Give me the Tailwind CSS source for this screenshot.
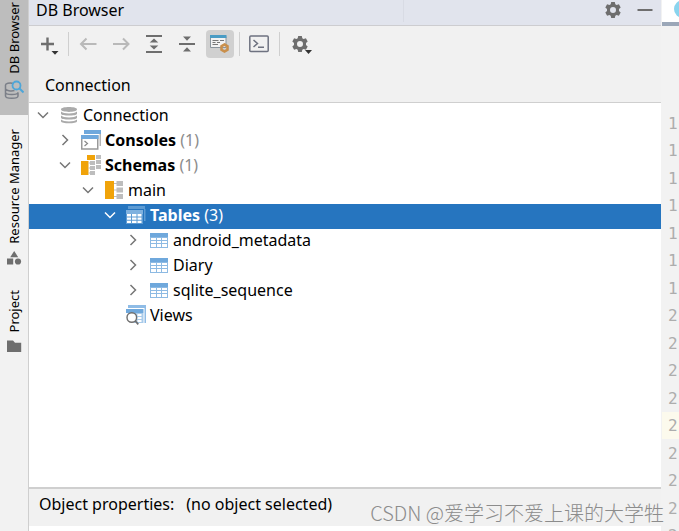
<!DOCTYPE html>
<html lang="en">
<head>
<meta charset="utf-8">
<title>DB Browser</title>
<script src="https://cdn.jsdelivr.net/npm/@tailwindcss/browser@4"></script>
</head>
<body class="flex h-screen overflow-hidden bg-[#f1f1f1] font-['Noto_Sans','Open_Sans',sans-serif] text-base leading-6 text-black">

<!-- Shared icon shapes -->
<svg class="hidden" aria-hidden="true">
  <symbol id="down" viewBox="0 0 20 20"><path d="M5 7.500l5 5 5-5" fill="none" stroke="currentColor" stroke-width="1.500"/></symbol>
  <symbol id="right" viewBox="0 0 20 20"><path d="M7.500 5l5 5-5 5" fill="none" stroke="currentColor" stroke-width="1.500"/></symbol>
  <symbol id="gear" viewBox="0 0 20 20"><path fill="#6e6e6e" fill-rule="evenodd" d="M8.200 2h3.600l.5 2.300 1.300.8 2.300-.8 1.800 3.100-1.700 1.600v2l1.700 1.600-1.800 3.100-2.300-.8-1.300.8-.5 2.300H8.200l-.5-2.300-1.300-.8-2.300.8-1.800-3.100L4 11V9L2.300 7.400l1.800-3.100 2.300.8 1.300-.8zM10 7a3 3 0 1 0 0 6 3 3 0 0 0 0-6z"/></symbol>
  <symbol id="table" viewBox="0 0 20 20"><path fill="#6fa8dc" d="M1 3h18v4H1z"/><path fill="#8dbae3" d="M1 7h18v11H1z"/><path fill="#fff" d="M2 8h5v2H2zM8 8h4v2H8zM13 8h5v2h-5zM2 11h5v2H2zM8 11h4v2H8zM13 11h5v2h-5zM2 14h5v3H2zM8 14h4v3H8zM13 14h5v3h-5z"/></symbol>
</svg>

<nav aria-label="Tool windows" class="flex w-[29px] shrink-0 flex-col border-r border-[#cfcfcf] bg-[#f2f2f2] text-[13px] leading-5">
  <button class="flex h-[115px] flex-col items-center justify-end gap-1.5 bg-[#bdbdbd] pb-[15px]">
    <span class="rotate-180 whitespace-nowrap [writing-mode:vertical-rl]">DB Browser</span>
    <svg class="size-5 shrink-0" viewBox="0 0 20 20" fill="none"><path d="M10 3.500C5 2.500 1.500 3.500 1.500 5v11c0 3 12.500 3 12.500 0v-3M1.500 8.500c0 2.300 6 2.800 9 2M1.500 12.300c0 3 12.500 3 12.500 0" stroke="#7b7f88" stroke-width="1.5"/><circle cx="12.500" cy="5.500" r="4" stroke="#4ea6d8" stroke-width="1.8"/><path d="M15.500 8.500l4 4" stroke="#4ea6d8" stroke-width="2"/></svg>
  </button>
  <button class="mt-3.5 flex flex-col items-center gap-1.5">
    <span class="rotate-180 whitespace-nowrap [writing-mode:vertical-rl]">Resource Manager</span>
    <svg class="size-4 shrink-0" viewBox="0 0 16 16" fill="#6e6e6e"><path d="M8.200 1l4 6.200h-8zM1 8.500h6.200v6H1z"/><circle cx="12" cy="11.500" r="3.100"/></svg>
  </button>
  <button class="mt-6 flex flex-col items-center gap-1.5">
    <span class="rotate-180 whitespace-nowrap [writing-mode:vertical-rl]">Project</span>
    <svg class="size-4 shrink-0" viewBox="0 0 16 16" fill="#6e6e6e"><path d="M1 2.500h6l2 2.200h6.200v9.300H1z"/></svg>
  </button>
</nav>

<main class="flex min-w-0 flex-1 flex-col">
  <header class="flex h-[26px] shrink-0 items-center border-b border-[#cdcdd0] bg-[#e1e4ed] pb-1.5 pl-[7px] pr-1.5">
    <h1 class="w-[368px] shrink-0 border-r border-[#d8dbe4]">DB Browser</h1>
    <div class="ml-auto flex items-center gap-3">
      <button aria-label="Options"><svg class="size-5"><use href="#gear"/></svg></button>
      <button aria-label="Hide"><svg class="size-5" viewBox="0 0 20 20"><path fill="#6e6e6e" d="M2.500 9h15v2h-15z"/></svg></button>
    </div>
  </header>

  <div role="toolbar" aria-label="Database" class="flex h-9 shrink-0 items-center gap-[5px] pl-1.5">
    <button aria-label="Add" class="grid size-7 place-items-center"><svg class="size-6" viewBox="0 0 24 24"><path d="M4 12h13M10.500 5.500v13" stroke="#6e6e6e" stroke-width="2.400"/><path fill="#333" d="M14.500 19h7L18 22.800z"/></svg></button>
    <span class="h-6 w-px bg-[#cfcfcf]"></span>
    <button aria-label="Back" class="grid size-7 place-items-center"><svg class="size-5" viewBox="0 0 20 20" fill="none"><path d="M18.500 10H3M8.500 4.500L3 10l5.500 5.500" stroke="#b9b9b9" stroke-width="2"/></svg></button>
    <button aria-label="Forward" class="grid size-7 place-items-center"><svg class="size-5" viewBox="0 0 20 20" fill="none"><path d="M2 10h15.500M12 4.500l5.500 5.500-5.500 5.500" stroke="#b9b9b9" stroke-width="2"/></svg></button>
    <button aria-label="Expand all" class="grid size-7 place-items-center"><svg class="size-5" viewBox="0 0 20 20" fill="#6e6e6e"><path d="M2 1h16v2H2zM2 17h16v2H2zM10 4.500l4.300 4H5.700zM10 15.500l4.300-4H5.700z"/></svg></button>
    <button aria-label="Collapse all" class="grid size-7 place-items-center"><svg class="size-5" viewBox="0 0 20 20" fill="#6e6e6e"><path d="M2 9h16v2H2zM6 2.500h8l-4 4.300zM6 17.500h8l-4-4.300z"/></svg></button>
    <button aria-label="Show object properties" aria-pressed="true" class="grid size-7 place-items-center rounded bg-[#d0d0d0]"><svg class="size-5" viewBox="0 0 20 20"><path fill="#f2f2f2" stroke="#8a949c" d="M.5 2.500h15.500v11H.5z"/><path fill="#4a9cc4" d="M0 1h16.500v3H0z"/><path d="M2.500 6.500h6M10 6.500h4M2.500 8.500h3M7 8.500h3M2.500 10.500h5.500" stroke="#777"/><path fill="none" stroke="#c98f4b" stroke-width="2.600" d="M14.500 10.500l3 1.700v3.600l-3 1.700-3-1.700v-3.600z"/></svg></button>
    <span class="h-6 w-px bg-[#cfcfcf]"></span>
    <button aria-label="Open console" class="grid size-7 place-items-center"><svg class="size-5" viewBox="0 0 20 20" fill="none" stroke="#6e7280"><rect x=".8" y="2" width="18.400" height="15.500" rx="1" stroke-width="1.500"/><path d="M4.500 6l4 3.500-4 3.500M9 13.300h6" stroke-width="1.500"/></svg></button>
    <span class="mx-px h-6 w-px bg-[#cfcfcf]"></span>
    <button aria-label="Settings" class="relative grid size-7 place-items-center"><svg class="size-5"><use href="#gear"/></svg><svg class="absolute bottom-1 right-0.5 h-1 w-[7px]" viewBox="0 0 7 4"><path fill="#333" d="M0 0h7L3.500 4z"/></svg></button>
  </div>

  <h2 class="flex h-[41px] shrink-0 items-center border-b border-[#cfcfcf] pl-4 pt-1.5">Connection</h2>

  <ul role="tree" aria-label="Connection objects" class="min-h-0 flex-1 overflow-hidden bg-white pt-px text-[#767676] *:flex *:h-[25px] *:items-center *:pb-[3px]">
    <li role="treeitem" aria-level="1" aria-expanded="true" class="pl-1">
      <svg class="mr-1.5 size-5"><use href="#down"/></svg>
      <svg class="mr-1 size-5" viewBox="0 0 20 20" fill="#aaa"><path d="M2 4.500C2 1.300 18 1.300 18 4.500S2 7.700 2 4.500zM2 6.500c2 2.500 14 2.500 16 0v2.200c0 2.500-16 2.500-16 0zM2 10.500c2 2.500 14 2.500 16 0v2.200c0 2.500-16 2.500-16 0zM2 14.500c2 2.500 14 2.500 16 0v1.700c0 2.700-16 2.700-16 0z"/></svg>
      <span class="text-black">Connection</span>
    </li>
    <li role="treeitem" aria-level="2" aria-expanded="false" class="pl-[26px]">
      <svg class="mr-1.5 size-5"><use href="#right"/></svg>
      <svg class="mr-1 size-5" viewBox="0 0 20 20"><path fill="#6fa8dc" d="M3 0h17v4H3z"/><path fill="#b5b5b5" d="M18.500 4H20v12h-1.500z"/><path fill="#fff" stroke="#999" stroke-width="1.500" d="M.75 6h16v13H.75z"/><path fill="#6fa8dc" d="M0 5h17.500v4H0z"/><path fill="none" stroke="#888" stroke-width="1.200" d="M3.500 11l3 2.500-3 2.500"/></svg>
      <span><b class="text-black">Consoles</b> <span class="text-[#8c8c8c]">(1)</span></span>
    </li>
    <li role="treeitem" aria-level="2" aria-expanded="true" class="pl-[26px]">
      <svg class="mr-1.5 size-5"><use href="#down"/></svg>
      <svg class="mr-1 size-5" viewBox="0 0 20 20"><path fill="#f0a30a" d="M0 6h7.500v14H0zM6 0h8v5H6z"/><path fill="#bdbdbd" d="M15 0h5v4h-5zM15 5h5v4h-5zM15 10h5v4h-5zM9 6h5v4H9zM9 11h5v4H9zM9 16h5v4H9zM7.500 7.500h2v1h-2zM7.500 12.500h2v1h-2zM7.500 17.500h2v1h-2z"/></svg>
      <span><b class="text-black">Schemas</b> <span class="text-[#8c8c8c]">(1)</span></span>
    </li>
    <li role="treeitem" aria-level="3" aria-expanded="true" class="pl-[49px]">
      <svg class="mr-1.5 size-5"><use href="#down"/></svg>
      <svg class="mr-1 size-5" viewBox="0 0 20 20"><path fill="#f0a30a" d="M1 1h9v18H1z"/><path fill="#bdbdbd" d="M12.500 1H19v5h-6.500zM12.500 7.500H19v5h-6.500zM12.500 14H19v5h-6.500zM10 3h3v1h-3zM10 9.500h3v1h-3zM10 16h3v1h-3z"/></svg>
      <span class="text-black">main</span>
    </li>
    <li role="treeitem" aria-level="4" aria-expanded="true" aria-selected="true" class="bg-[#2675bf] pl-[71px] text-white">
      <svg class="mr-1.5 size-5"><use href="#down"/></svg>
      <svg class="mr-1 size-5" viewBox="0 0 20 20"><path fill="#5d9bd3" d="M2 1h17v3H2zM18 4h1.500v12H18z"/><path fill="#7fb1df" d="M0 5h17v4H0z"/><path fill="#5d9bd3" d="M0 9h17v10H0z"/><path fill="#fff" d="M1 9h4v2.500H1zM6 9h4.500v2.500H6zM11.500 9h4v2.500h-4zM1 12.500h4v2.200H1zM6 12.500h4.500v2.200H6zM11.500 12.500h4v2.200h-4zM1 15.700h4V18H1zM6 15.700h4.500V18H6zM11.500 15.700h4V18h-4z"/></svg>
      <span><b>Tables</b> (3)</span>
    </li>
    <li role="treeitem" aria-level="5" aria-expanded="false" class="pl-[94px]">
      <svg class="mr-1.5 size-5"><use href="#right"/></svg>
      <svg class="mr-1 size-5"><use href="#table"/></svg>
      <span class="text-black">android_metadata</span>
    </li>
    <li role="treeitem" aria-level="5" aria-expanded="false" class="pl-[94px]">
      <svg class="mr-1.5 size-5"><use href="#right"/></svg>
      <svg class="mr-1 size-5"><use href="#table"/></svg>
      <span class="text-black">Diary</span>
    </li>
    <li role="treeitem" aria-level="5" aria-expanded="false" class="pl-[94px]">
      <svg class="mr-1.5 size-5"><use href="#right"/></svg>
      <svg class="mr-1 size-5"><use href="#table"/></svg>
      <span class="text-black">sqlite_sequence</span>
    </li>
    <li role="treeitem" aria-level="4" class="pl-[97px]">
      <svg class="mr-1 size-5" viewBox="0 0 20 20"><path fill="#8fbce6" d="M2 0h18v3H2zM18.500 3H20v15h-1.500z"/><path fill="#6fa8dc" d="M0 4h17.500v4H0z"/><path fill="#a9cbea" d="M8 8h9.500v10H8z"/><path fill="#fff" d="M11.500 9h4v2h-4zM11.500 12h4v2h-4zM11.500 15h4v2h-4z"/><circle cx="5.800" cy="12.500" r="4.800" fill="#fff" stroke="#6e6e6e" stroke-width="1.400"/><path d="M9.300 16l3 3.300" stroke="#6e6e6e" stroke-width="1.800"/></svg>
      <span class="text-black">Views</span>
    </li>
  </ul>

  <footer class="shrink-0 border-t-2 border-[#cfcfcf]">
    <dl class="flex h-[37px] items-center gap-3 bg-[#f1f1f1] pb-[7px] pl-2.5">
      <dt>Object properties:</dt>
      <dd>(no object selected)</dd>
    </dl>
    <div class="h-[5px] bg-white"></div>
  </footer>
</main>

<aside aria-label="Editor" class="w-[18px] shrink-0 overflow-hidden bg-[#f2f2f2] pl-px">
  <div class="h-[26px] overflow-hidden border-b-4 border-[#9ba7b8] bg-white pl-3">
    <span class="block size-[18px] rounded-full bg-[#8ad4ee]"></span>
  </div>
  <ol class="mt-[83px] grid h-[440px] auto-rows-fr font-['DejaVu_Sans_Mono',monospace] text-base text-[#adadad] *:flex *:items-center *:pl-1.5 *:pt-0.5">
    <li>1</li><li>1</li><li>1</li><li>1</li><li>1</li><li>1</li><li>1</li><li>2</li><li>2</li><li>2</li><li>2</li><li class="bg-[#fcfaed]">2</li><li>2</li><li>2</li><li>2</li><li>2</li>
  </ol>
</aside>

<p class="pointer-events-none absolute bottom-1 right-[15px] whitespace-nowrap font-['Noto_Sans_CJK_SC',sans-serif] text-xl font-light leading-7 text-[#8c8c8c]">CSDN @爱学习不爱上课的大学牲</p>
</body>
</html>
